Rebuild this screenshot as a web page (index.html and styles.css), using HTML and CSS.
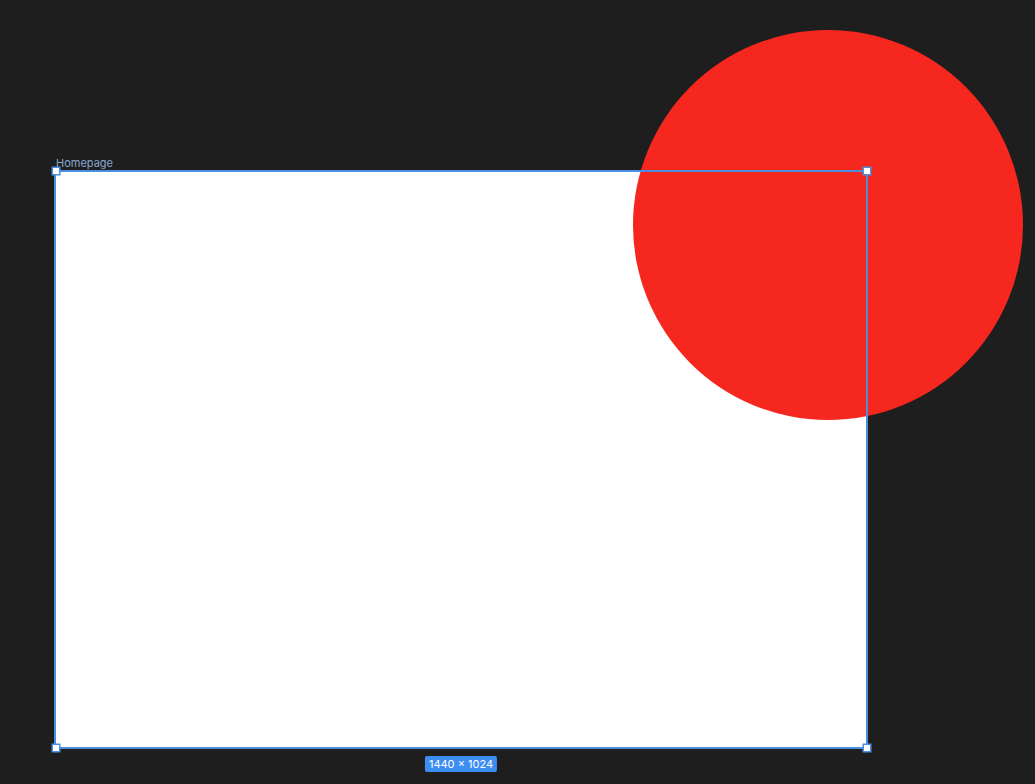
FILE: index.html
```html
<!DOCTYPE html>
<html>
<head>
<meta charset="utf-8">
<link rel="stylesheet" href="styles.css">
</head>
<body>
<div class="canvas">
  <div class="frame"></div>
  <div class="circle"></div>
  <div class="frame-label">Homepage</div>
  <div class="selection">
    <span class="handle tl"></span>
    <span class="handle tr"></span>
    <span class="handle bl"></span>
    <span class="handle br"></span>
    <span class="size-badge">1440 × 1024</span>
  </div>
</div>
</body>
</html>
```
FILE: styles.css
```css
html, body {
  margin: 0;
  padding: 0;
  background: #1e1e1e;
  font-family: Inter, "Noto Sans", sans-serif;
}
.canvas {
  position: relative;
  width: 1035px;
  height: 784px;
  overflow: hidden;
  background: #1e1e1e;
}
.frame {
  position: absolute;
  left: 55px;
  top: 171px;
  width: 812px;
  height: 577px;
  background: #ffffff;
}
.circle {
  position: absolute;
  left: 633px;
  top: 30px;
  width: 390px;
  height: 390px;
  border-radius: 50%;
  background: #f5271f;
}
.frame-label {
  position: absolute;
  left: 56px;
  top: 157px;
  font-size: 11px;
  line-height: 13px;
  color: #86a8cf;
}
.selection {
  position: absolute;
  left: 54px;
  top: 170px;
  width: 810px;
  height: 575px;
  border: 2px solid #4a8ee0;
}
.handle {
  position: absolute;
  width: 6px;
  height: 6px;
  background: #ffffff;
  border: 1px solid #4a8ee0;
  box-shadow: 0 0 0 0.5px #4a8ee0;
}
.handle.tl { left: -4px; top: -5px; }
.handle.tr { right: -5px; top: -5px; }
.handle.bl { left: -4px; bottom: -5px; }
.handle.br { right: -5px; bottom: -5px; }
.size-badge {
  position: absolute;
  left: 50%;
  top: 584px;
  transform: translateX(-50%);
  height: 16px;
  line-height: 16px;
  padding: 0 4px;
  border-radius: 2px;
  background: #3d8ef0;
  color: #ffffff;
  font-size: 11px;
  white-space: nowrap;
}
```
